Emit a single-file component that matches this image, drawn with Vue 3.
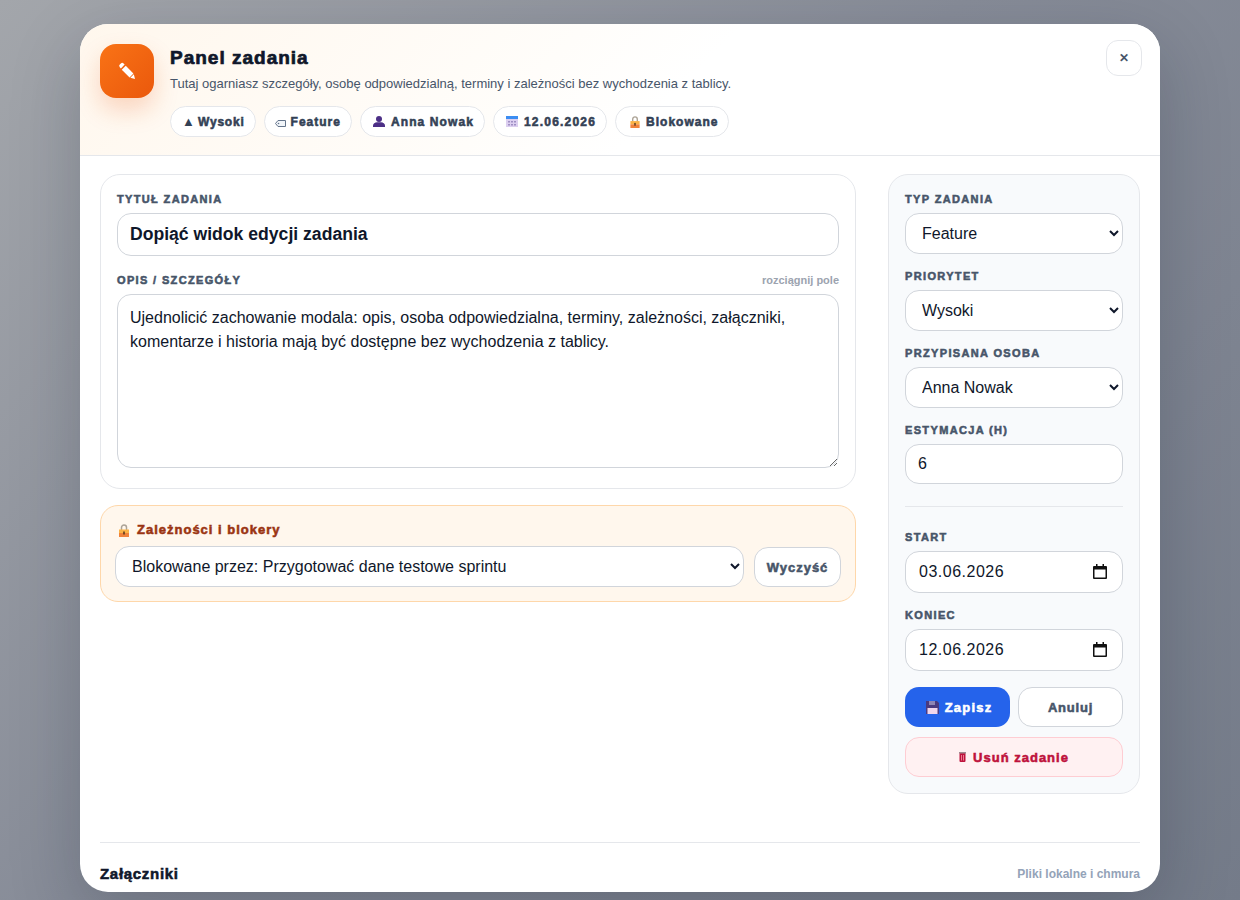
<template>
	<div class="overlay">
		<div class="modal">
			<header class="modal-header">
				<div class="header-icon">
					<svg width="18" height="18" viewBox="0 0 20 20" fill="#fff">
						<path d="M3.200 1.700a2.100 2.100 0 0 1 3 0l1.200 1.200-4.200 4.200-1.200-1.200a2.100 2.100 0 0 1 0-3z" />
						<path d="M8.600 4.200 4.200 8.600l8.700 8.500 4.200-4.200z" />
						<path d="M17.600 13.600l-3.900 3.900 5.200 1.400z" />
					</svg>
				</div>
				<div class="header-text">
					<h1>Panel zadania</h1>
					<p>Tutaj ogarniasz szczegóły, osobę odpowiedzialną, terminy i zależności bez wychodzenia z tablicy.</p>
					<div class="chips">
						<span class="chip chip-tight"><span class="triangle">▲</span>Wysoki</span>
						<span class="chip">
							<svg class="icon-tag" width="11" height="7" viewBox="0 0 11 7">
								<path d="M3 .5h7.500v6H3L.5 3.500z" fill="#f1f5f9" stroke="#64748b" />
								<circle cx="3.500" cy="3.500" r=".8" fill="#64748b" />
							</svg>
							Feature
						</span>
						<span class="chip chip-person">
							<svg class="icon-chip" width="12" height="11" viewBox="0 0 12 11" fill="#4c2f86">
								<circle cx="6" cy="3" r="3" />
								<path d="M0 11V9.500C0 7.800 2 6.500 4 6.300h4c2 .2 4 1.500 4 3.200V11z" />
							</svg>
							Anna Nowak
						</span>
						<span class="chip chip-wide">
							<svg class="icon-chip" width="12" height="11" viewBox="0 0 12 11">
								<rect width="12" height="11" fill="#dccff0" />
								<rect width="12" height="3" fill="#3b8df2" />
								<path d="M2 5h2v1.500H2zM5 5h2v1.500H5zM8 5h2v1.500H8zM2 8h2v1.500H2zM5 8h2v1.500H5zM8 8h2v1.500H8z" fill="#9f8fc4" />
							</svg>
							12.06.2026
						</span>
						<span class="chip">
							<svg class="icon-lock" width="10" height="12" viewBox="0 0 10 13">
								<path d="M2.500 6V3.500a2.500 2.500 0 0 1 5 0V6" fill="none" stroke="#aca396" stroke-width="1.500" />
								<rect y="5.500" width="10" height="3.500" fill="#fbb346" />
								<rect y="9" width="10" height="4" fill="#f0823a" />
								<rect x="4.200" y="7.500" width="1.600" height="3" fill="#5b3a1e" />
							</svg>
							Blokowane
						</span>
					</div>
				</div>
				<button class="close-btn">✕</button>
			</header>

			<div class="modal-body">
				<div class="columns">
					<div class="left-col">
						<section class="card">
							<label class="field-label">Tytuł zadania</label>
							<input v-model="title" class="control title-input" type="text" />
							<div class="label-row">
								<label class="field-label">Opis / szczegóły</label>
								<span class="hint">rozciągnij pole</span>
							</div>
							<textarea v-model="description" class="control description"></textarea>
						</section>

						<section class="blockers">
							<div class="blockers-title">
								<svg width="10" height="13" viewBox="0 0 10 13">
									<path d="M2.500 6V3.500a2.500 2.500 0 0 1 5 0V6" fill="none" stroke="#aca396" stroke-width="1.500" />
									<rect y="5.500" width="10" height="3.500" fill="#fbb346" />
									<rect y="9" width="10" height="4" fill="#f0823a" />
									<rect x="4.200" y="7.500" width="1.600" height="3" fill="#5b3a1e" />
								</svg>
								Zależności i blokery
							</div>
							<div class="blockers-row">
								<select v-model="blocker" class="control select blocker-select">
									<option>Blokowane przez: Przygotować dane testowe sprintu</option>
								</select>
								<button class="btn clear-btn">Wyczyść</button>
							</div>
						</section>
					</div>

					<aside class="side">
						<label class="field-label">Typ zadania</label>
						<select v-model="type" class="control select">
							<option>Feature</option>
							<option>Bug</option>
						</select>
						<label class="field-label">Priorytet</label>
						<select v-model="priority" class="control select">
							<option>Wysoki</option>
							<option>Średni</option>
						</select>
						<label class="field-label">Przypisana osoba</label>
						<select v-model="assignee" class="control select">
							<option>Anna Nowak</option>
						</select>
						<label class="field-label">Estymacja (h)</label>
						<input v-model="estimate" class="control number" type="number" />
						<div class="divider"></div>
						<template v-for="field in dates" :key="field.label">
							<label class="field-label">{{ field.label }}</label>
							<div class="date-field">
								<input class="control date" type="text" :value="field.value" />
								<svg class="date-icon" width="14" height="15" viewBox="0 0 14 15">
									<path d="M3 0h1.500v2h5V0H11v2h2a1 1 0 0 1 1 1v11a1 1 0 0 1-1 1H1a1 1 0 0 1-1-1V3a1 1 0 0 1 1-1h2zM1.500 5.500v8h11v-8z" fill="#111" fill-rule="evenodd" />
								</svg>
							</div>
						</template>
						<div class="actions">
							<button class="btn save-btn">
								<svg width="13" height="13" viewBox="0 0 13 13">
									<path d="M0 0h11l2 2v11H0z" fill="#4b3a80" />
									<rect x="3" y="0" width="6" height="4" fill="#8f85b5" />
									<rect x="1.500" y="7" width="10" height="6" fill="#f1d6ec" />
								</svg>
								Zapisz
							</button>
							<button class="btn cancel-btn">Anuluj</button>
						</div>
						<button class="btn delete-btn">
							<svg width="7" height="10" viewBox="0 0 7 10">
								<rect x=".5" width="6" height="10" rx="1" fill="#be123c" />
								<rect width="7" height="1.500" fill="#9f8a90" />
								<path d="M2 3h.800v5.500H2zM4.200 3H5v5.500h-.800z" fill="#f29aa8" />
							</svg>
							Usuń zadanie
						</button>
					</aside>
				</div>

				<div class="attachments">
					<h2>Załączniki</h2>
					<span>Pliki lokalne i chmura</span>
				</div>
			</div>
		</div>
	</div>
</template>

<script setup>
import { ref } from 'vue';

const title = ref('Dopiąć widok edycji zadania');
const description = ref(
	'Ujednolicić zachowanie modala: opis, osoba odpowiedzialna, terminy, zależności, załączniki, komentarze i historia mają być dostępne bez wychodzenia z tablicy.'
);
const blocker = ref('Blokowane przez: Przygotować dane testowe sprintu');
const type = ref('Feature');
const priority = ref('Wysoki');
const assignee = ref('Anna Nowak');
const estimate = ref(6);
const dates = [
	{ label: 'Start', value: '03.06.2026' },
	{ label: 'Koniec', value: '12.06.2026' },
];
</script>

<style>
html,
body {
	margin: 0;
	height: 100%;
	overflow: hidden;
}
</style>

<style scoped>
.overlay {
	box-sizing: border-box;
	height: 900px;
	padding: 24px 80px 8px;
	background: linear-gradient(135deg, #a3a6ab 0%, #878c98 45%, #747b89 100%);
	font-family: 'Liberation Sans', Arial, sans-serif;
	color: #0f172a;
}

.modal {
	height: 868px;
	background: #fff;
	border-radius: 28px;
	overflow: hidden;
	box-shadow: 0 24px 70px rgba(15, 23, 42, 0.22);
}

.modal-header {
	box-sizing: border-box;
	height: 132px;
	display: flex;
	gap: 16px;
	padding: 20px 18px 0 20px;
	border-bottom: 1px solid #e5e7eb;
	background: linear-gradient(135deg, #fff7ed 0%, #fffdfa 42%, #fff 55%);
}

.header-icon {
	flex: none;
	width: 54px;
	height: 54px;
	border-radius: 16px;
	display: flex;
	align-items: center;
	justify-content: center;
	background: linear-gradient(135deg, #f97316, #ea580c);
	box-shadow: 0 12px 24px rgba(234, 88, 12, 0.22);
}

.header-text {
	flex: 1;
}

h1 {
	margin: 3px 0 0;
	font-size: 19px;
	line-height: 22px;
	font-weight: 700;
	letter-spacing: 1px;
	-webkit-text-stroke: 0.7px currentColor;
	color: #0f172a;
}

.header-text p {
	margin: 7px 0 0;
	font-size: 13px;
	line-height: 16px;
	color: #475569;
}

.chips {
	display: flex;
	gap: 8px;
	margin-top: 14px;
}

.chip {
	box-sizing: border-box;
	height: 31px;
	display: flex;
	align-items: center;
	padding: 0 10px 0 11px;
	border: 1px solid #e5e7eb;
	border-radius: 999px;
	background: #fff;
	font-size: 12px;
	font-weight: 700;
	letter-spacing: 1px;
	-webkit-text-stroke: 0.55px currentColor;
	color: #334155;
}

.chip-tight {
	letter-spacing: 0.8px;
}

.chip-person {
	letter-spacing: 1.1px;
}

.chip-wide {
	letter-spacing: 1.2px;
}

.triangle {
	width: 16px;
	font-size: 13px;
	letter-spacing: 0;
	-webkit-text-stroke: 0;
}

.icon-tag {
	margin: 4px 5px 0 -1px;
}

.icon-chip {
	margin: 0 6px 0 1px;
}

.icon-lock {
	margin: 0 6px 0 3px;
}

.close-btn {
	flex: none;
	width: 36px;
	height: 36px;
	margin-top: -4px;
	border: 1px solid #e5e7eb;
	border-radius: 12px;
	background: #fff;
	color: #475569;
	font-family: inherit;
	font-size: 12px;
	font-weight: 700;
	padding: 0;
}

.modal-body {
	padding: 18px 20px 0;
}

.columns {
	display: grid;
	grid-template-columns: 756px 252px;
	gap: 32px;
}

.left-col {
	display: flex;
	flex-direction: column;
	gap: 16px;
}

.card {
	display: flex;
	flex-direction: column;
	padding: 18px 16px 20px;
	border: 1px solid #e5e7eb;
	border-radius: 20px;
	background: #fff;
}

.field-label {
	display: block;
	margin-bottom: 7px;
	font-size: 11px;
	line-height: 13px;
	font-weight: 700;
	letter-spacing: 1.35px;
	-webkit-text-stroke: 0.55px currentColor;
	text-transform: uppercase;
	color: #475569;
}

.label-row {
	display: flex;
	justify-content: space-between;
	margin-top: 18px;
}

.hint {
	font-size: 11px;
	line-height: 13px;
	font-weight: 700;
	color: #9ca3af;
}

.control {
	box-sizing: border-box;
	width: 100%;
	border: 1px solid #d1d5db;
	border-radius: 14px;
	background: #fff;
	padding: 0 12px;
	font-family: inherit;
	font-size: 16px;
	color: #0f172a;
	outline: none;
}

.title-input {
	height: 43px;
	font-size: 17.6px;
	font-weight: 700;
}

.description {
	display: block;
	height: 174px;
	padding: 11px 12px 10px;
	line-height: 24px;
	resize: vertical;
}

.blockers {
	height: 97px;
	box-sizing: border-box;
	padding: 15px 14px 14px;
	border: 1px solid #fed7aa;
	border-radius: 18px;
	background: #fff7ed;
}

.blockers-title {
	display: flex;
	align-items: center;
	gap: 8px;
	padding-left: 4px;
	font-size: 13px;
	line-height: 18px;
	font-weight: 700;
	letter-spacing: 1px;
	-webkit-text-stroke: 0.55px currentColor;
	color: #9a3412;
}

.blockers-row {
	display: flex;
	gap: 10px;
	margin-top: 7px;
}

.blocker-select {
	width: 629px;
	flex: none;
}

.select {
	height: 41px;
	margin-bottom: 16px;
}

.blockers-row .select {
	margin-bottom: 0;
}

.btn {
	box-sizing: border-box;
	height: 40px;
	display: flex;
	align-items: center;
	justify-content: center;
	gap: 6px;
	border-radius: 14px;
	font-family: inherit;
	font-size: 13px;
	font-weight: 700;
	letter-spacing: 1px;
	-webkit-text-stroke: 0.55px currentColor;
	padding: 0;
}

.clear-btn {
	width: 87px;
	margin-top: 1px;
	border: 1px solid #d1d5db;
	background: #fff;
	color: #475569;
}

.side {
	box-sizing: border-box;
	height: 620px;
	padding: 18px 16px 16px;
	border: 1px solid #e5e7eb;
	border-radius: 20px;
	background: #f8fafc;
}

.number {
	height: 40px;
	display: block;
}

.divider {
	height: 1px;
	background: #e5e7eb;
	margin: 22px 0 24px;
}

.date-field {
	position: relative;
	margin-bottom: 16px;
}

.date {
	display: block;
	height: 42px;
	padding-left: 13px;
	letter-spacing: 0.5px;
}

.date-icon {
	position: absolute;
	top: 13px;
	right: 16px;
}

.actions {
	display: grid;
	grid-template-columns: 1fr 1fr;
	gap: 8px;
}

.save-btn {
	border: none;
	padding-left: 3px;
	letter-spacing: 1.2px;
	background: #2563eb;
	color: #fff;
}

.cancel-btn {
	border: 1px solid #d1d5db;
	letter-spacing: 0.8px;
	background: #fff;
	color: #475569;
}

.delete-btn {
	width: 100%;
	margin-top: 10px;
	gap: 7px;
	border: 1px solid #fecdd3;
	background: #fff1f2;
	color: #be123c;
}

.attachments {
	display: flex;
	justify-content: space-between;
	align-items: center;
	margin-top: 48px;
	padding-top: 21px;
	border-top: 1px solid #e5e7eb;
}

h2 {
	margin: 0;
	font-size: 15px;
	line-height: 20px;
	font-weight: 700;
	letter-spacing: 0.7px;
	-webkit-text-stroke: 0.55px currentColor;
	color: #0f172a;
}

.attachments span {
	font-size: 12px;
	font-weight: 700;
	color: #94a3b8;
}
</style>
